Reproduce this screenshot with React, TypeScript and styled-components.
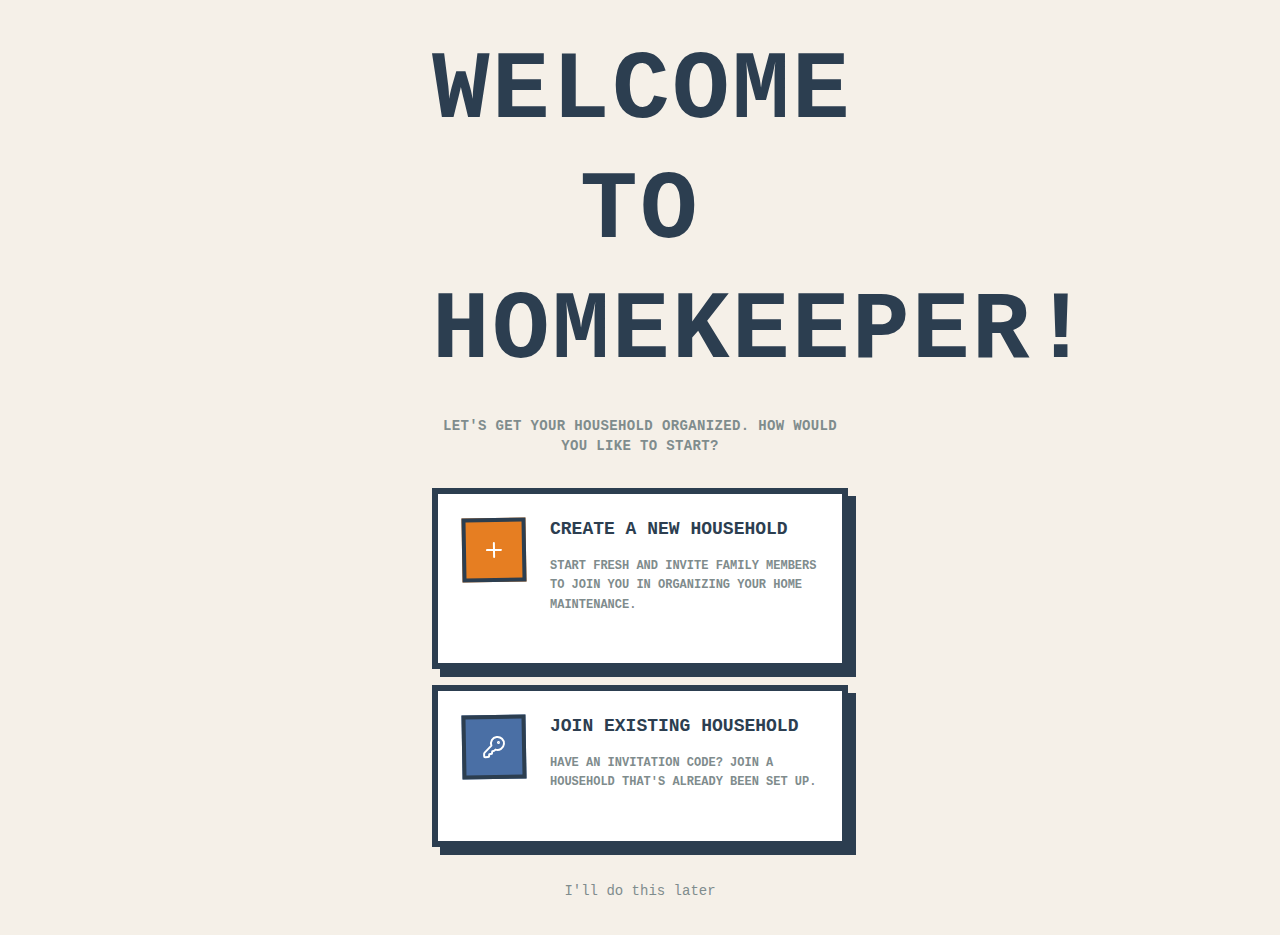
import React from "react";
import styled, { createGlobalStyle } from "styled-components";
import { KeyRound, Plus } from "lucide-react";

const navy = "#2c3e50";
const slate = "#7f8c8d";

const GlobalStyle = createGlobalStyle`
  *, *::before, *::after {
    box-sizing: border-box;
  }

  body {
    margin: 0;
    background: #f5f0e8;
    color: ${navy};
    font-family: "Liberation Mono", "Courier New", monospace;
  }
`;

const Page = styled.main`
  min-height: 100vh;
  display: flex;
  justify-content: center;
  padding: 32px 16px 24px;
`;

const Content = styled.div`
  width: 100%;
  max-width: 416px;
  display: flex;
  flex-direction: column;
`;

const Header = styled.header`
  margin-bottom: 32px;
  text-align: center;
  text-transform: uppercase;
`;

const Title = styled.h1`
  margin: 0 0 24px;
  font-size: 96px;
  font-weight: 700;
  line-height: 120px;
  letter-spacing: 0.025em;
`;

const Subtitle = styled.p`
  margin: 0;
  color: ${slate};
  font-size: 14px;
  font-weight: 700;
  line-height: 20px;
  letter-spacing: 0.025em;
`;

const Options = styled.div`
  display: flex;
  flex-direction: column;
  gap: 16px;
`;

const OptionCard = styled.button`
  display: flex;
  align-items: flex-start;
  gap: 24px;
  width: 100%;
  padding: 24px;
  border: 6px solid ${navy};
  border-radius: 0;
  background: #ffffff;
  box-shadow: 8px 8px 0 ${navy};
  color: ${navy};
  font-family: inherit;
  text-align: left;
  text-transform: uppercase;
  cursor: pointer;
`;

const IconTile = styled.span<{ $color: string }>`
  display: flex;
  flex-shrink: 0;
  align-items: center;
  justify-content: center;
  width: 64px;
  height: 64px;
  border: 4px solid ${navy};
  background: ${({ $color }) => $color};
  color: #ffffff;
  transform: rotate(-1deg);
`;

const OptionText = styled.span`
  display: flex;
  flex: 1;
  flex-direction: column;
  gap: 16px;
  min-width: 0;
  padding-bottom: 24px;
`;

const OptionTitle = styled.span`
  font-size: 18px;
  font-weight: 700;
  line-height: 1.25;
`;

const OptionDescription = styled.span`
  color: ${slate};
  font-size: 12px;
  font-weight: 700;
  line-height: 1.625;
`;

const SkipButton = styled.button`
  align-self: center;
  margin-top: 24px;
  padding: 12px 24px;
  border: 0;
  background: transparent;
  color: ${slate};
  font-family: inherit;
  font-size: 14px;
  cursor: pointer;
`;

const options = [
  {
    title: "Create a new household",
    description:
      "Start fresh and invite family members to join you in organizing your home maintenance.",
    color: "#e67e22",
    Icon: Plus,
  },
  {
    title: "Join existing household",
    description:
      "Have an invitation code? Join a household that's already been set up.",
    color: "#4a6fa5",
    Icon: KeyRound,
  },
];

export default function App() {
  return (
    <>
      <GlobalStyle />
      <Page>
        <Content>
          <Header>
            <Title>Welcome to HomeKeeper!</Title>
            <Subtitle>
              Let's get your household organized. How would you like to start?
            </Subtitle>
          </Header>
          <Options>
            {options.map(({ title, description, color, Icon }) => (
              <OptionCard key={title} type="button">
                <IconTile $color={color}>
                  <Icon size={24} strokeWidth={2} aria-hidden="true" />
                </IconTile>
                <OptionText>
                  <OptionTitle>{title}</OptionTitle>
                  <OptionDescription>{description}</OptionDescription>
                </OptionText>
              </OptionCard>
            ))}
          </Options>
          <SkipButton type="button">I'll do this later</SkipButton>
        </Content>
      </Page>
    </>
  );
}
